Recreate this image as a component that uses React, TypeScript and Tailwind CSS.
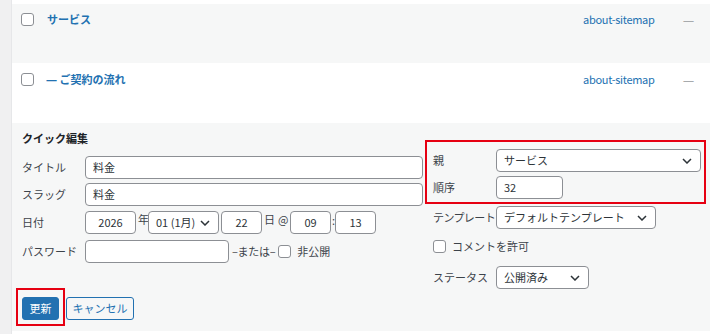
import React from "react";

const FONT = { fontFamily: '"Noto Sans CJK JP", "Noto Sans", sans-serif' };
const DASH = { fontFamily: '"Noto Sans", "DejaVu Sans", sans-serif' };

function Chevron() {
  return (
    <svg width="10" height="6" viewBox="0 0 10 6" className="absolute right-[8px] top-1/2 -translate-y-1/2">
      <path d="M1 1l4 4 4-4" fill="none" stroke="#2c3338" strokeWidth="1.5" />
    </svg>
  );
}

function Select({ value, className }: { value: string; className: string }) {
  return (
    <div
      className={
        "relative flex h-[23px] items-center rounded-[4px] border border-[#8c8f94] bg-white pl-[7px] text-[#2c3338] " +
        className
      }
    >
      {value}
      <Chevron />
    </div>
  );
}

function Input({ value, className }: { value?: string; className: string }) {
  return (
    <div
      className={
        "flex h-[23px] items-center rounded-[4px] border border-[#8c8f94] bg-white text-[#2c3338] " + className
      }
    >
      {value}
    </div>
  );
}

function Checkbox() {
  return <div className="h-[13px] w-[13px] shrink-0 rounded-[3px] border border-[#8c8f94] bg-white" />;
}

export default function App() {
  return (
    <div className="flex h-[334px] w-[710px] bg-[#f0f0f1] text-[11px] text-[#3c434a]" style={FONT}>
      <div className="w-[11px] shrink-0" />
      <div className="flex flex-1 flex-col border-l border-[#e6e7e9]">
        <div className="h-[4px] bg-white" />

        {/* page rows */}
        <div className="h-[59px] bg-[#f6f7f7] pt-[9px]">
          <div className="flex items-start">
            <div className="ml-[9px]">
              <Checkbox />
            </div>
            <div className="ml-[13px] flex-1 font-bold leading-[13px] text-[#2271b1]">サービス</div>
            <div className="w-[100px] leading-[13px] tracking-[-0.3px] text-[#2271b1]">about-sitemap</div>
            <div className="w-[27px] leading-[13px] text-[#a7aaad]" style={DASH}>
              —
            </div>
          </div>
        </div>
        <div className="h-[60px] bg-white pt-[10px]">
          <div className="flex items-start">
            <div className="ml-[9px]">
              <Checkbox />
            </div>
            <div className="ml-[12px] flex-1 font-bold leading-[13px] text-[#2271b1]">
              <span style={DASH}>—</span> ご契約の流れ
            </div>
            <div className="w-[100px] leading-[13px] tracking-[-0.3px] text-[#2271b1]">about-sitemap</div>
            <div className="w-[27px] leading-[13px] text-[#a7aaad]" style={DASH}>
              —
            </div>
          </div>
        </div>

        {/* quick edit */}
        <div className="flex h-[208px] flex-col bg-[#f6f7f7]">
          <div className="flex h-[165px] items-start pt-[7px] pl-[10px]">
            {/* left fieldset */}
            <div className="w-[401px]">
              <div className="leading-[16px] font-bold text-[#1d2327]">クイック編集</div>
              <div className="mt-[10px] flex items-center">
                <div className="w-[63px]">タイトル</div>
                <Input value="料金" className="w-[338px] pl-[7px]" />
              </div>
              <div className="mt-[4px] flex items-center">
                <div className="w-[63px]">スラッグ</div>
                <Input value="料金" className="w-[338px] pl-[7px]" />
              </div>
              <div className="mt-[5px] flex items-start">
                <div className="flex h-[23px] w-[63px] items-center">日付</div>
                <Input value="2026" className="w-[51px] justify-center" />
                <div className="w-[12px] pt-[2px] pl-[2px] leading-[13px]">年</div>
                <Select value="01 (1月)" className="w-[71px]" />
                <div className="w-[2px]" />
                <Input value="22" className="w-[41px] justify-center" />
                <div className="flex w-[28px] gap-[3px] pt-[2px] pl-[2px] leading-[13px]">
                  <span>日</span>
                  <span>@</span>
                </div>
                <Input value="09" className="w-[41px] justify-center" />
                <div className="w-[4px] pt-[3px] pl-[1px] leading-[13px]">:</div>
                <Input value="13" className="w-[41px] justify-center" />
              </div>
              <div className="mt-[6px] flex items-center">
                <div className="w-[63px]">パスワード</div>
                <Input className="w-[144px]" />
                <div className="ml-[3px] tracking-[-0.3px]">–または–</div>
                <div className="ml-[3px]">
                  <Checkbox />
                </div>
                <div className="ml-[6px]">非公開</div>
              </div>
            </div>

            {/* right fieldset */}
            <div className="mt-[10px] ml-[2px] w-[281px]">
              <div className="border-2 border-[#e60012] pt-[7px] pr-[3px] pb-[3px] pl-[6px]">
                <div className="flex items-center">
                  <div className="w-[63px]">親</div>
                  <Select value="サービス" className="flex-1" />
                </div>
                <div className="mt-[4px] flex items-center">
                  <div className="w-[63px]">順序</div>
                  <Input value="32" className="w-[67px] pl-[7px]" />
                </div>
              </div>
              <div className="mt-[2px] flex items-center pl-[8px]">
                <div className="w-[63px] tracking-[-0.6px] whitespace-nowrap">テンプレート</div>
                <Select value="デフォルトテンプレート" className="w-[160px]" />
              </div>
              <div className="mt-[11px] flex items-center pl-[8px]">
                <Checkbox />
                <div className="ml-[6px] leading-[13px]">コメントを許可</div>
              </div>
              <div className="mt-[13px] flex items-center pl-[8px]">
                <div className="w-[63px]">ステータス</div>
                <Select value="公開済み" className="w-[93px]" />
              </div>
            </div>
          </div>

          {/* buttons */}
          <div className="flex items-start pl-[4px]">
            <div className="border-2 border-[#e60012] px-[4px] pt-[7px] pb-[4px]">
              <div className="flex h-[23px] w-[37px] items-center justify-center rounded-[3px] border border-[#2271b1] bg-[#2271b1] text-white">
                更新
              </div>
            </div>
            <div className="mt-[9px] ml-[1px] flex h-[23px] w-[68px] items-center justify-center rounded-[3px] border border-[#2271b1] bg-[#f6f7f7] text-[#2271b1]">
              キャンセル
            </div>
          </div>
        </div>
        <div className="flex-1 bg-white" />
      </div>
    </div>
  );
}
